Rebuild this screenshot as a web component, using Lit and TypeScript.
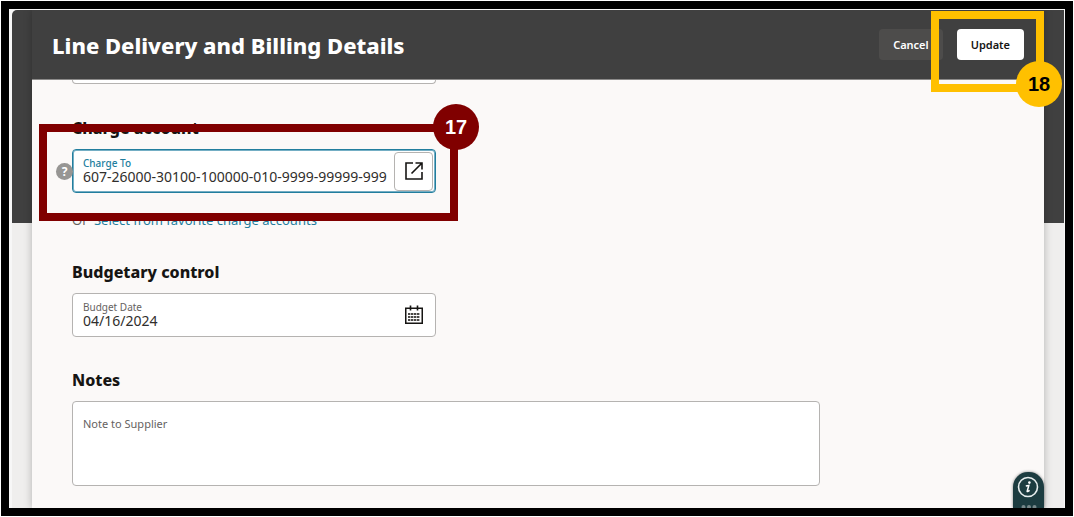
import { LitElement, html, css } from "lit";
import { customElement, state } from "lit/decorators.js";

@customElement("app-root")
export class AppRoot extends LitElement {
  static styles = css`
    :host {
      display: block;
      height: 100vh;
      padding: 1px;
      box-sizing: border-box;
      background: #fff;
      font-family: "Noto Sans", "Open Sans", sans-serif;
      color: #161513;
    }
    * {
      box-sizing: border-box;
    }
    .frame {
      height: 100%;
      border: 8px solid #000;
      padding: 1px 1px 0 3px;
      background: #f7f7f7;
      overflow: hidden;
    }
    .backdrop {
      height: 100%;
      padding: 0 20px;
      border-radius: 5px 0 0 0;
      overflow: hidden;
      background: linear-gradient(#404040 213px, #efeeed 213px);
    }
    .panel {
      position: relative;
      height: 100%;
      display: flex;
      flex-direction: column;
      background: #fbf9f8;
      box-shadow: 0 0 8px rgba(0, 0, 0, 0.25);
    }
    .header {
      display: flex;
      align-items: center;
      justify-content: space-between;
      padding: 0 20px;
      height: 70px;
      flex: none;
      background: #404040;
      border-bottom: 1px solid #8b8a89;
      color: #fff;
    }
    h1 {
      margin: 0;
      font-size: 22px;
      line-height: 32px;
      font-weight: 800;
    }
    .actions {
      display: flex;
      gap: 14px;
    }
    .btn {
      height: 31px;
      padding: 0 14px;
      border: 0;
      border-radius: 4px;
      font: 600 11px/16px "Noto Sans", "Open Sans", sans-serif;
    }
    .cancel {
      background: #4d4c4b;
      color: #fff;
    }
    .update {
      background: #fff;
      color: #161513;
    }
    .spot {
      position: relative;
      display: flex;
    }
    .mark {
      position: absolute;
      border: 8px solid;
      pointer-events: none;
    }
    .badge {
      position: absolute;
      width: 46px;
      height: 46px;
      border-radius: 50%;
      display: flex;
      align-items: center;
      justify-content: center;
      font: 700 20px/24px "Liberation Sans", Arial, sans-serif;
    }
    .gold {
      inset: -18px -20px -32px -26px;
      border-color: #ffc000;
    }
    .gold .badge {
      right: -26px;
      bottom: -23px;
      background: #ffc000;
      color: #000;
    }
    .red {
      inset: -26px -23px -29px -34px;
      border-color: #800000;
    }
    .red .badge {
      right: -29px;
      top: -28px;
      background: #800000;
      color: #fff;
    }
    .body {
      padding: 0 40px;
      flex: 1;
      min-height: 0;
      overflow: hidden;
    }
    .grid {
      display: grid;
      grid-template-columns: 1fr 1fr;
      column-gap: 20px;
      max-width: 748px;
    }
    .grid > * {
      grid-column: 1;
    }
    .grid > .wide {
      grid-column: 1 / -1;
    }
    .above {
      height: 4px;
      border: 1px solid #b5b3b1;
      border-top: 0;
      border-radius: 0 0 4px 4px;
      background: #fff;
    }
    h2 {
      margin: 32px 0 9px;
      font-size: 16px;
      line-height: 24px;
      font-weight: 800;
    }
    .low {
      margin-top: 30px;
    }
    .notes {
      margin-top: 31px;
    }
    .field {
      position: relative;
      display: flex;
      align-items: center;
      height: 44px;
      padding-left: 10px;
      border: 1px solid #b5b3b1;
      border-radius: 4px;
      background: #fff;
    }
    .active {
      border-color: #227e9e;
      box-shadow: inset 0 0 0 1px #74aec4;
    }
    .stack {
      flex: 1;
      min-width: 0;
      display: flex;
      flex-direction: column;
    }
    .label {
      font-size: 10px;
      line-height: 12px;
      color: #65625f;
    }
    .active .label {
      color: #227e9e;
      font-weight: 500;
    }
    input {
      width: 100%;
      height: 16px;
      padding: 0;
      border: 0;
      outline: 0;
      background: none;
      font: 14px/16px "Noto Sans", "Open Sans", sans-serif;
      color: #302e2c;
    }
    .icon {
      display: flex;
      align-items: center;
      justify-content: center;
      width: 39px;
      height: 39px;
      margin-right: 2px;
      padding: 0;
      border: 0;
      background: none;
    }
    .boxed {
      background: #fff;
      border: 1px solid #b5b3b1;
      border-radius: 4px;
    }
    .help {
      position: absolute;
      left: -17px;
      top: 13px;
      width: 17px;
      height: 17px;
      padding: 0;
      border: 0;
      border-radius: 50%;
      background: #979694;
      color: #fff;
      font: 700 12px/17px "Noto Sans", "Open Sans", sans-serif;
    }
    .alt {
      margin: 17px 0 0;
      font-size: 13px;
      line-height: 20px;
      color: #65625f;
    }
    .alt a {
      margin-left: 3px;
      color: #227e9e;
      text-decoration: none;
    }
    textarea {
      display: block;
      width: 100%;
      height: 85px;
      padding: 14px 10px;
      border: 1px solid #b5b3b1;
      border-radius: 4px;
      outline: 0;
      resize: none;
      background: #fff;
      font: 11px/16px "Noto Sans", "Open Sans", sans-serif;
    }
    textarea::placeholder {
      color: #65625f;
      opacity: 1;
    }
    .info {
      position: absolute;
      right: 0;
      bottom: 0;
      width: 31px;
      height: 36px;
      padding: 0;
      border: 0;
      border-radius: 15px 15px 0 0;
      background: #1c3c40;
      box-shadow: 0 0 3px rgba(0, 0, 0, 0.5);
    }
    svg {
      display: block;
    }
  `;

  @state() private account = "607-26000-30100-100000-010-9999-99999-999";
  @state() private budgetDate = "04/16/2024";

  private calendarDots() {
    const xs = [4, 7, 10, 13];
    const ys = [8, 11, 14];
    return ys.map((y) => xs.map((x) => `M${x} ${y}h2.4v2h-2.4z`).join("")).join("");
  }

  render() {
    return html`
      <div class="frame">
        <div class="backdrop">
          <main class="panel">
            <header class="header">
              <h1>Line Delivery and Billing Details</h1>
              <div class="actions">
                <button class="btn cancel">Cancel</button>
                <div class="spot">
                  <button class="btn update">Update</button>
                  <div class="mark gold"><span class="badge">18</span></div>
                </div>
              </div>
            </header>
            <div class="body">
              <div class="grid">
                <div class="above"></div>
                <h2>Charge account</h2>
                <div class="field active">
                  <button class="help" aria-label="Help">?</button>
                  <div class="stack">
                    <label class="label" for="account">Charge To</label>
                    <input id="account" .value=${this.account} />
                  </div>
                  <button class="icon boxed" aria-label="Open account picker">
                    <svg width="18" height="18" viewBox="0 0 18 18" fill="none" stroke="#161513" stroke-width="1.6">
                      <path d="M8 1H1V17H17V10M10.5 1H17V7.5M17 1L6.5 11.5" />
                    </svg>
                  </button>
                  <div class="mark red"><span class="badge">17</span></div>
                </div>
                <p class="alt">Or <a href="#favorites">Select from favorite charge accounts</a></p>
                <h2 class="low">Budgetary control</h2>
                <div class="field">
                  <div class="stack">
                    <label class="label" for="date">Budget Date</label>
                    <input id="date" .value=${this.budgetDate} />
                  </div>
                  <button class="icon" aria-label="Select date">
                    <svg width="20" height="20" viewBox="0 0 20 20">
                      <path d="M1.75 3.25H18.25V18.25H1.75Z" fill="none" stroke="#161513" stroke-width="1.5" />
                      <path d="M6.5 0.5V5.5M13.5 0.5V5.5" stroke="#161513" stroke-width="1.6" />
                      <path d=${this.calendarDots()} fill="#4a4846" />
                    </svg>
                  </button>
                </div>
                <h2 class="notes">Notes</h2>
                <textarea class="wide" aria-label="Note to Supplier" placeholder="Note to Supplier"></textarea>
              </div>
            </div>
            <button class="info" aria-label="Information">
              <svg width="31" height="36" viewBox="0 0 31 36">
                <circle cx="15" cy="15" r="9.5" fill="none" stroke="#e8eeee" stroke-width="1.6" />
                <circle cx="16.4" cy="10.6" r="1.3" fill="#fff" />
                <path d="M12.8 14L15.8 13.4L14.2 19.2Q14.1 20.2 16.6 18.4" fill="none" stroke="#fff" stroke-width="1.5" />
                <g fill="#77888a">
                  <circle cx="10.5" cy="35" r="2" />
                  <circle cx="16" cy="35" r="2" />
                  <circle cx="21.5" cy="35" r="2" />
                </g>
              </svg>
            </button>
          </main>
        </div>
      </div>
    `;
  }
}
